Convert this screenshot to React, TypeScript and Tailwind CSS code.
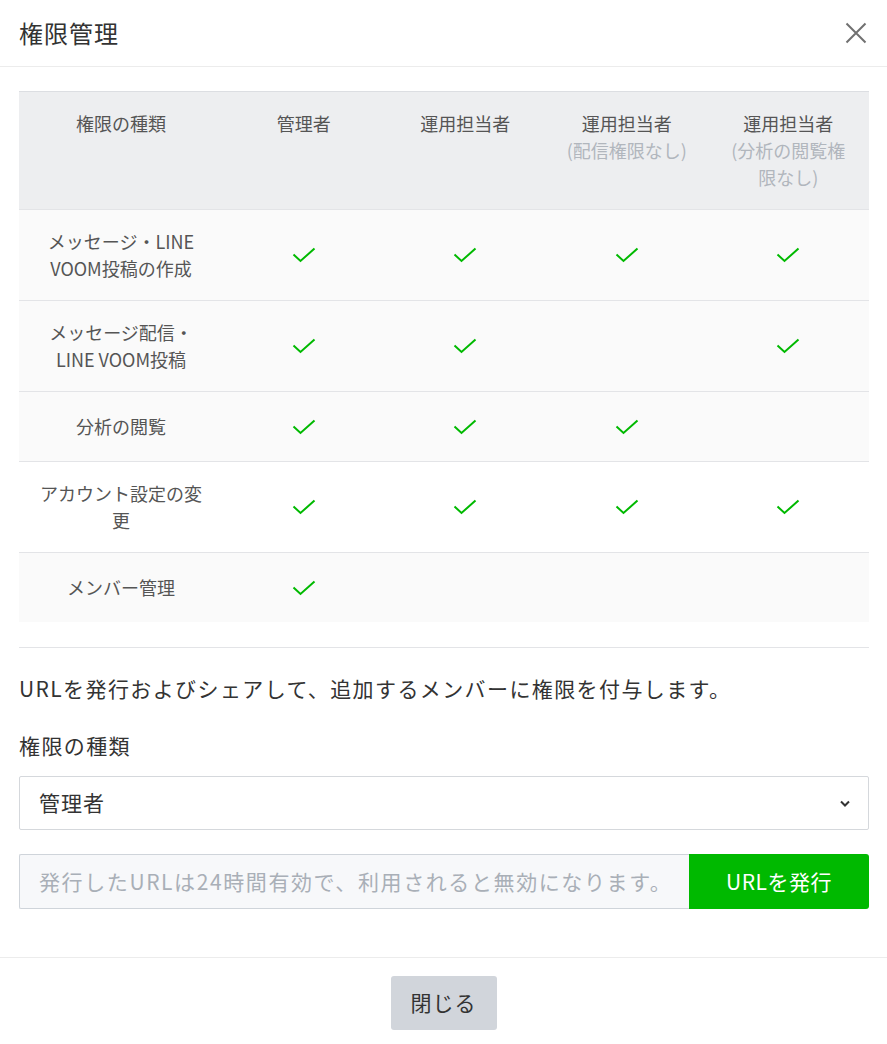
import React from 'react';

const font = { fontFamily: '"Noto Sans CJK JP", "Noto Sans", sans-serif' };

function Check() {
    return (
        <svg width="24" height="16" viewBox="0 0 24 16" fill="none">
            <path d="M1.5 7.5L8.5 14L22.5 1.5" stroke="#00b900" strokeWidth="2" />
        </svg>
    );
}

const rows: { label: React.ReactNode; checks: boolean[]; bg: string }[] = [
    { label: <>メッセージ・LINE<br />VOOM投稿の作成</>, checks: [true, true, true, true], bg: 'bg-[#fafafa]' },
    { label: <>メッセージ配信・<br />LINE VOOM投稿</>, checks: [true, true, false, true], bg: 'bg-[#fafafa]' },
    { label: '分析の閲覧', checks: [true, true, true, false], bg: 'bg-[#fafafa]' },
    { label: 'アカウント設定の変更', checks: [true, true, true, true], bg: 'bg-white' },
    { label: 'メンバー管理', checks: [true, false, false, false], bg: 'bg-[#fafafa]' },
];

export default function App() {
    return (
        <div className="w-[887px] h-[1044px] bg-white text-[#333] flex flex-col" style={font}>
            {/* Header */}
            <div className="h-[67px] border-b border-[#ececec] flex items-center justify-between pl-[19px] pr-[20px] shrink-0">
                <h1 className="text-[24px] tracking-[1px] text-[#333]">権限管理</h1>
                <svg width="22" height="22" viewBox="0 0 22 22" fill="none">
                    <path d="M1.5 1.5L20.5 20.5M20.5 1.5L1.5 20.5" stroke="#707070" strokeWidth="2" />
                </svg>
            </div>

            {/* Body */}
            <div className="pl-[19px] pr-[18px] pt-[24px] flex flex-col flex-1">
                <div className="border-t border-[#dcdee2] text-[18px] leading-[27px] text-[#555]">
                    <div className="grid grid-cols-[204px_1fr_1fr_1fr_1fr] bg-[#edeef0] py-[18px] text-center">
                        <div>権限の種類</div>
                        <div>管理者</div>
                        <div>運用担当者</div>
                        <div>
                            運用担当者
                            <div className="text-[#b1b6bd]">(配信権限なし)</div>
                        </div>
                        <div className="px-[16px]">
                            運用担当者
                            <div className="text-[#b1b6bd]">(分析の閲覧権限なし)</div>
                        </div>
                    </div>
                    {rows.map((r, i) => (
                        <div
                            key={i}
                            className={`grid grid-cols-[204px_1fr_1fr_1fr_1fr] border-t border-[#e3e4e7] min-h-[70px] py-[18px] items-center text-center ${r.bg}`}
                        >
                            <div className="px-[20px]">{r.label}</div>
                            {r.checks.map((c, j) => (
                                <div key={j} className="flex justify-center">
                                    {c && <Check />}
                                </div>
                            ))}
                        </div>
                    ))}
                </div>

                <div className="border-t border-[#e3e4e7] mt-[25px] pt-[24px]">
                    <p className="text-[21px] leading-[32px] tracking-[1.4px] text-[#333]">
                        URLを発行およびシェアして、追加するメンバーに権限を付与します。
                    </p>
                    <p className="text-[21px] leading-[32px] tracking-[1.4px] mt-[25px] text-[#333]">権限の種類</p>
                    <div className="mt-[15px] h-[54px] border border-[#d5d8dc] rounded-[2px] flex items-center justify-between pl-[19px] pr-[18px]">
                        <span className="text-[21px] tracking-[1px]">管理者</span>
                        <svg width="10" height="7" viewBox="0 0 10 7" fill="none">
                            <path d="M1 1.5L5 5.5L9 1.5" stroke="#333" strokeWidth="2" />
                        </svg>
                    </div>
                    <div className="mt-[24px] h-[55px] flex">
                        <div className="flex-1 border border-r-0 border-[#cfd4da] bg-[#f7f8fa] rounded-l-[2px] flex items-center pl-[19px] text-[21px] text-[#a9afb7] tracking-[1.6px]">
                            発行したURLは24時間有効で、利用されると無効になります。
                        </div>
                        <button className="w-[180px] bg-[#00b900] text-white text-[21px] tracking-[0.5px] rounded-r-[3px]">URLを発行</button>
                    </div>
                </div>
            </div>

            {/* Footer */}
            <div className="h-[87px] border-t border-[#ececec] flex items-start justify-center pt-[18px] shrink-0">
                <button className="w-[106px] h-[54px] bg-[#d1d5db] rounded-[3px] text-[21px] tracking-[1px] text-[#333]">閉じる</button>
            </div>
        </div>
    );
}
